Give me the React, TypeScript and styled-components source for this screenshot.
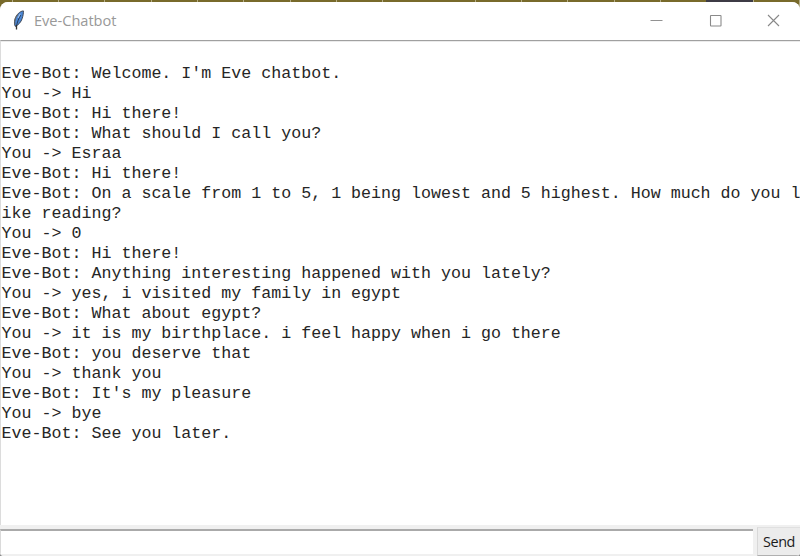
import React from 'react';
import styled, { createGlobalStyle } from 'styled-components';

const GlobalStyle = createGlobalStyle`
  * { box-sizing: border-box; }
  html, body { margin: 0; padding: 0; overflow: hidden; }
`;

const Desktop = styled.div`
  width: 800px;
  height: 556px;
  padding-top: 2px;
  overflow: hidden;
  background:
    linear-gradient(#3d3b45, #3d3b45) 706px 0 / 47px 2px no-repeat,
    repeating-linear-gradient(90deg, #786a2b 0, #786a2b 45.3px, #b5ad86 45.3px, #b5ad86 46.3px) -33.5px 0 / 900px 10px no-repeat,
    #8c8c8c;
`;

const Window = styled.div`
  height: 554px;
  display: flex;
  flex-direction: column;
  background: #f0f0f0;
  border-radius: 8px 8px 4px 4px;
  overflow: hidden;
`;

const TitleBar = styled.header`
  flex: 0 0 38px;
  display: flex;
  align-items: center;
  background: #fff;
  padding-left: 11px;
`;

const Title = styled.h1`
  flex: 1;
  margin: -2px 0 0 7px;
  font: 400 14.6px/20px 'Open Sans', sans-serif;
  letter-spacing: -0.02px;
  color: #999;
`;

const Controls = styled.div`
  display: flex;
  margin-right: -3px;
`;

const ControlButton = styled.button`
  width: 58.5px;
  height: 38px;
  padding: 0 0 2px;
  border: 0;
  background: none;
  display: grid;
  place-items: center;
`;

const Log = styled.main`
  flex: 0 0 485px;
  border-top: 1px solid #a0a0a0;
  border-left: 1px solid #dcdcdc;
  box-shadow: inset 0 1px #ebebeb;
  background: #fff;
  padding: 23px 0 0 0.6px;
  overflow: hidden;
`;

const Message = styled.p`
  margin: 0;
  width: 800px;
  font: 400 16.65px/20px 'Liberation Mono', 'Courier New', monospace;
  color: #262626;
  white-space: pre-wrap;
  word-break: break-all;
`;

const Composer = styled.form`
  flex: 1;
  display: flex;
  padding-top: 4px;
  background: #f0f0f0;
`;

const Entry = styled.input`
  width: 754px;
  height: 25px;
  padding: 0 4px;
  border: 0;
  border-top: 2px solid #aaa;
  border-left: 1px solid #dadada;
  background: #fff;
  outline: none;
  font: 16px 'Liberation Mono', monospace;
`;

const SendButton = styled.button`
  width: 43px;
  height: 29px;
  margin: -2px 0 0 4px;
  padding: 0;
  border: 0;
  border-left: 1px solid #d8d8d8;
  border-top: 1px solid #e0e0e0;
  border-bottom: 1px solid #b0b0b0;
  background: #ececec;
  color: #1b1b1b;
  font: 400 14.4px/27px 'Open Sans', sans-serif;
  letter-spacing: -0.4px;
`;

const messages = [
  "Eve-Bot: Welcome. I'm Eve chatbot.",
  'You -> Hi',
  'Eve-Bot: Hi there!',
  'Eve-Bot: What should I call you?',
  'You -> Esraa',
  'Eve-Bot: Hi there!',
  'Eve-Bot: On a scale from 1 to 5, 1 being lowest and 5 highest. How much do you like reading?',
  'You -> 0',
  'Eve-Bot: Hi there!',
  'Eve-Bot: Anything interesting happened with you lately?',
  'You -> yes, i visited my family in egypt',
  'Eve-Bot: What about egypt?',
  'You -> it is my birthplace. i feel happy when i go there',
  'Eve-Bot: you deserve that',
  'You -> thank you',
  "Eve-Bot: It's my pleasure",
  'You -> bye',
  'Eve-Bot: See you later.',
];

const FeatherIcon = () => (
  <svg width="16" height="22" viewBox="0 0 16 22" fill="none">
    <path d="M12.4 .9C9 1 5.2 4.8 3.9 9.4c-.7 2.8-.6 5 .4 7 3.2-1.4 5.8-4.4 6.9-7.9.8-2.7 1.4-5.2 1.2-7.6Z" fill="#4a86d4" stroke="#333b48" strokeWidth=".9" />
    <path d="M4 14.2C3.4 11 4.6 7 7 4.2" stroke="#666" strokeWidth="1.1" />
    <path d="M9.7 5.2C7.6 8.6 6.3 12 5.5 16" stroke="#1c2738" strokeWidth=".8" />
    <path d="M9.2 3.8 7 8" stroke="#b9cfee" strokeWidth=".9" />
    <path d="M5.5 15v4.4" stroke="#333" strokeWidth="1.3" />
  </svg>
);

export default function App() {
  return (
    <>
      <GlobalStyle />
      <Desktop>
        <Window>
          <TitleBar>
            <FeatherIcon />
            <Title>Eve-Chatbot</Title>
            <Controls>
              <ControlButton aria-label="Minimize">
                <svg width="13" height="13"><path d="M.5 6.5h12" stroke="#929292" /></svg>
              </ControlButton>
              <ControlButton aria-label="Maximize">
                <svg width="13" height="13"><rect x="1.5" y="1.5" width="10.5" height="10.5" rx=".5" fill="none" stroke="#8a8a8a" strokeWidth="1.1" /></svg>
              </ControlButton>
              <ControlButton aria-label="Close">
                <svg width="13" height="13"><path d="m1 1 11 11M12 1 1 12" stroke="#888" strokeWidth="1.1" /></svg>
              </ControlButton>
            </Controls>
          </TitleBar>
          <Log>
            {messages.map((text, i) => (
              <Message key={i}>{text}</Message>
            ))}
          </Log>
          <Composer onSubmit={(e) => e.preventDefault()}>
            <Entry aria-label="Message" />
            <SendButton type="submit">Send</SendButton>
          </Composer>
        </Window>
      </Desktop>
    </>
  );
}
